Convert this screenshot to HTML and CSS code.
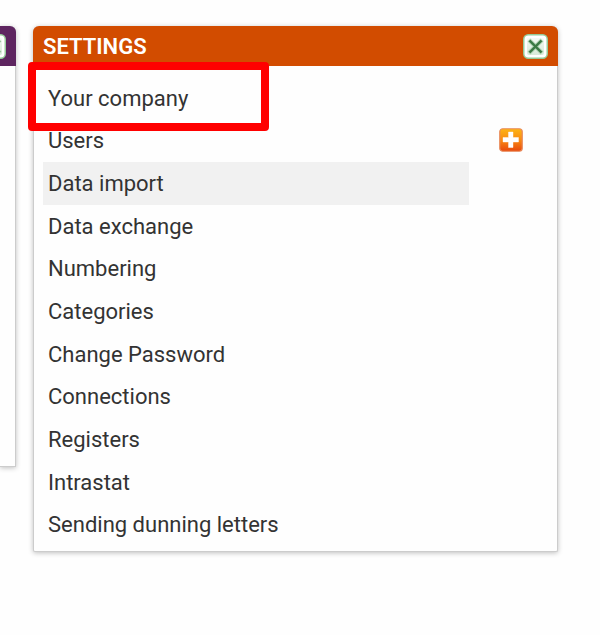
FILE: index.html
```html
<!DOCTYPE html>
<html lang="en">
<head>
    <meta charset="UTF-8">
    <meta name="viewport" content="width=device-width, initial-scale=1.0">
    <title>Settings</title>
    <link rel="stylesheet" href="styles.css">
</head>
<body>
    <svg class="symbols" aria-hidden="true">
        <linearGradient id="closeFill" x1="0" y1="0" x2="0" y2="1">
            <stop offset="0" stop-color="#f4faf4"/>
            <stop offset="0.5" stop-color="#e4f1e4"/>
            <stop offset="1" stop-color="#d8ebd9"/>
        </linearGradient>
        <linearGradient id="addFill" x1="0" y1="0" x2="0" y2="1">
            <stop offset="0" stop-color="#fdb515"/>
            <stop offset="0.5" stop-color="#f98a12"/>
            <stop offset="1" stop-color="#e8480c"/>
        </linearGradient>
        <symbol id="close" viewBox="0 0 25 25">
            <rect x="0.75" y="0.75" width="23.5" height="23.5" rx="4.5" fill="#fff" stroke="#94cb98" stroke-width="1.5"/>
            <rect x="4" y="4" width="17" height="17" rx="2" fill="url(#closeFill)"/>
            <path d="M6 6l13 13M19 6l-13 13" stroke="#a9cfac" stroke-width="4"/>
            <path d="M6.5 6.5l12 12M18.5 6.5l-12 12" stroke="#3a7a43" stroke-width="2.4"/>
        </symbol>
    </svg>
    <div class="dashboard">
        <section class="card card-previous">
            <header class="card-header">
                <button class="close" aria-label="Close"><svg><use href="#close"/></svg></button>
            </header>
        </section>
        <section class="card card-settings">
            <header class="card-header">
                <h2>SETTINGS</h2>
                <button class="close" aria-label="Close"><svg><use href="#close"/></svg></button>
            </header>
            <ul class="menu">
                <li class="marked"><a href="#">Your company</a></li>
                <li>
                    <a href="#">Users</a>
                    <button class="add" aria-label="Add user">
                        <svg viewBox="0 0 24 24">
                            <rect x="0.75" y="0.75" width="22.5" height="22.5" rx="3" fill="url(#addFill)" stroke="#e88a5c" stroke-width="1.2"/>
                            <path d="M9.5 4h4.5v5.5h5.5v4.500h-5.5v5.500h-4.500v-5.500h-5.500v-4.500h5.500z" fill="#fff" stroke="#fff" stroke-opacity="0.4"/>
                        </svg>
                    </button>
                </li>
                <li><a class="active" href="#">Data import</a></li>
                <li><a href="#">Data exchange</a></li>
                <li><a href="#">Numbering</a></li>
                <li><a href="#">Categories</a></li>
                <li><a href="#">Change Password</a></li>
                <li><a href="#">Connections</a></li>
                <li><a href="#">Registers</a></li>
                <li><a href="#">Intrastat</a></li>
                <li><a href="#">Sending dunning letters</a></li>
            </ul>
        </section>
    </div>
</body>
</html>
```
FILE: styles.css
```css
body {
    margin: 0;
    padding: 26px 42px 40px 0;
    background-color: #fefefe;
    color: #333;
    font-family: Roboto, Arial, sans-serif;
    font-size: 22px;
}
.symbols {
    position: absolute;
    width: 0;
    height: 0;
}
.dashboard {
    display: flex;
    align-items: flex-start;
    gap: 17px;
}
.card {
    box-sizing: border-box;
    background-color: #fefefe;
    border: 1px solid #ccc;
    border-top: none;
    border-radius: 6px 6px 2px 2px;
    box-shadow: 0 1px 5px rgba(0, 0, 0, 0.25);
}
.card-previous {
    flex: none;
    width: 16px;
    min-height: 441px;
    border-left: none;
    border-radius: 0 6px 0 0;
}
.card-settings {
    flex: 1;
}
.card-header {
    display: flex;
    align-items: center;
    justify-content: space-between;
    height: 40px;
    margin: 0 -1px;
    padding: 0 10px;
    background-color: #d24c00;
    border-radius: 6px 6px 0 0;
}
.card-previous .card-header {
    justify-content: flex-end;
    margin-left: 0;
    padding-left: 0;
    background-color: #5e2560;
    border-radius: 0 6px 0 0;
    overflow: hidden;
}
h2 {
    margin: 0;
    color: #fff;
    font-size: 22px;
    font-weight: 600;
}
button {
    padding: 0;
    background: none;
    border: none;
    cursor: pointer;
}
button svg {
    display: block;
    width: 100%;
    height: 100%;
}
.close {
    flex: none;
    width: 25px;
    height: 25px;
}
.menu {
    display: flex;
    flex-direction: column;
    min-height: 469px;
    margin: 0;
    padding: 11px 9px 5px;
    list-style: none;
}
.menu li {
    position: relative;
    display: flex;
    flex: 1;
    align-items: stretch;
    padding-right: 79px;
}
.menu a {
    display: flex;
    flex: 1;
    align-items: center;
    padding: 0 5px;
    color: #333;
    text-decoration: none;
}
.menu a.active,
.menu a:hover {
    background-color: #f1f1f1;
}
.add {
    position: absolute;
    top: 8px;
    right: 25px;
    width: 24px;
    height: 24px;
}
/* highlight frame around the first entry */
.marked::after {
    content: "";
    position: absolute;
    top: -15px;
    left: -15px;
    box-sizing: border-box;
    width: 241px;
    height: 69px;
    border: 8px solid #f00;
    border-radius: 4px;
    pointer-events: none;
}
```
